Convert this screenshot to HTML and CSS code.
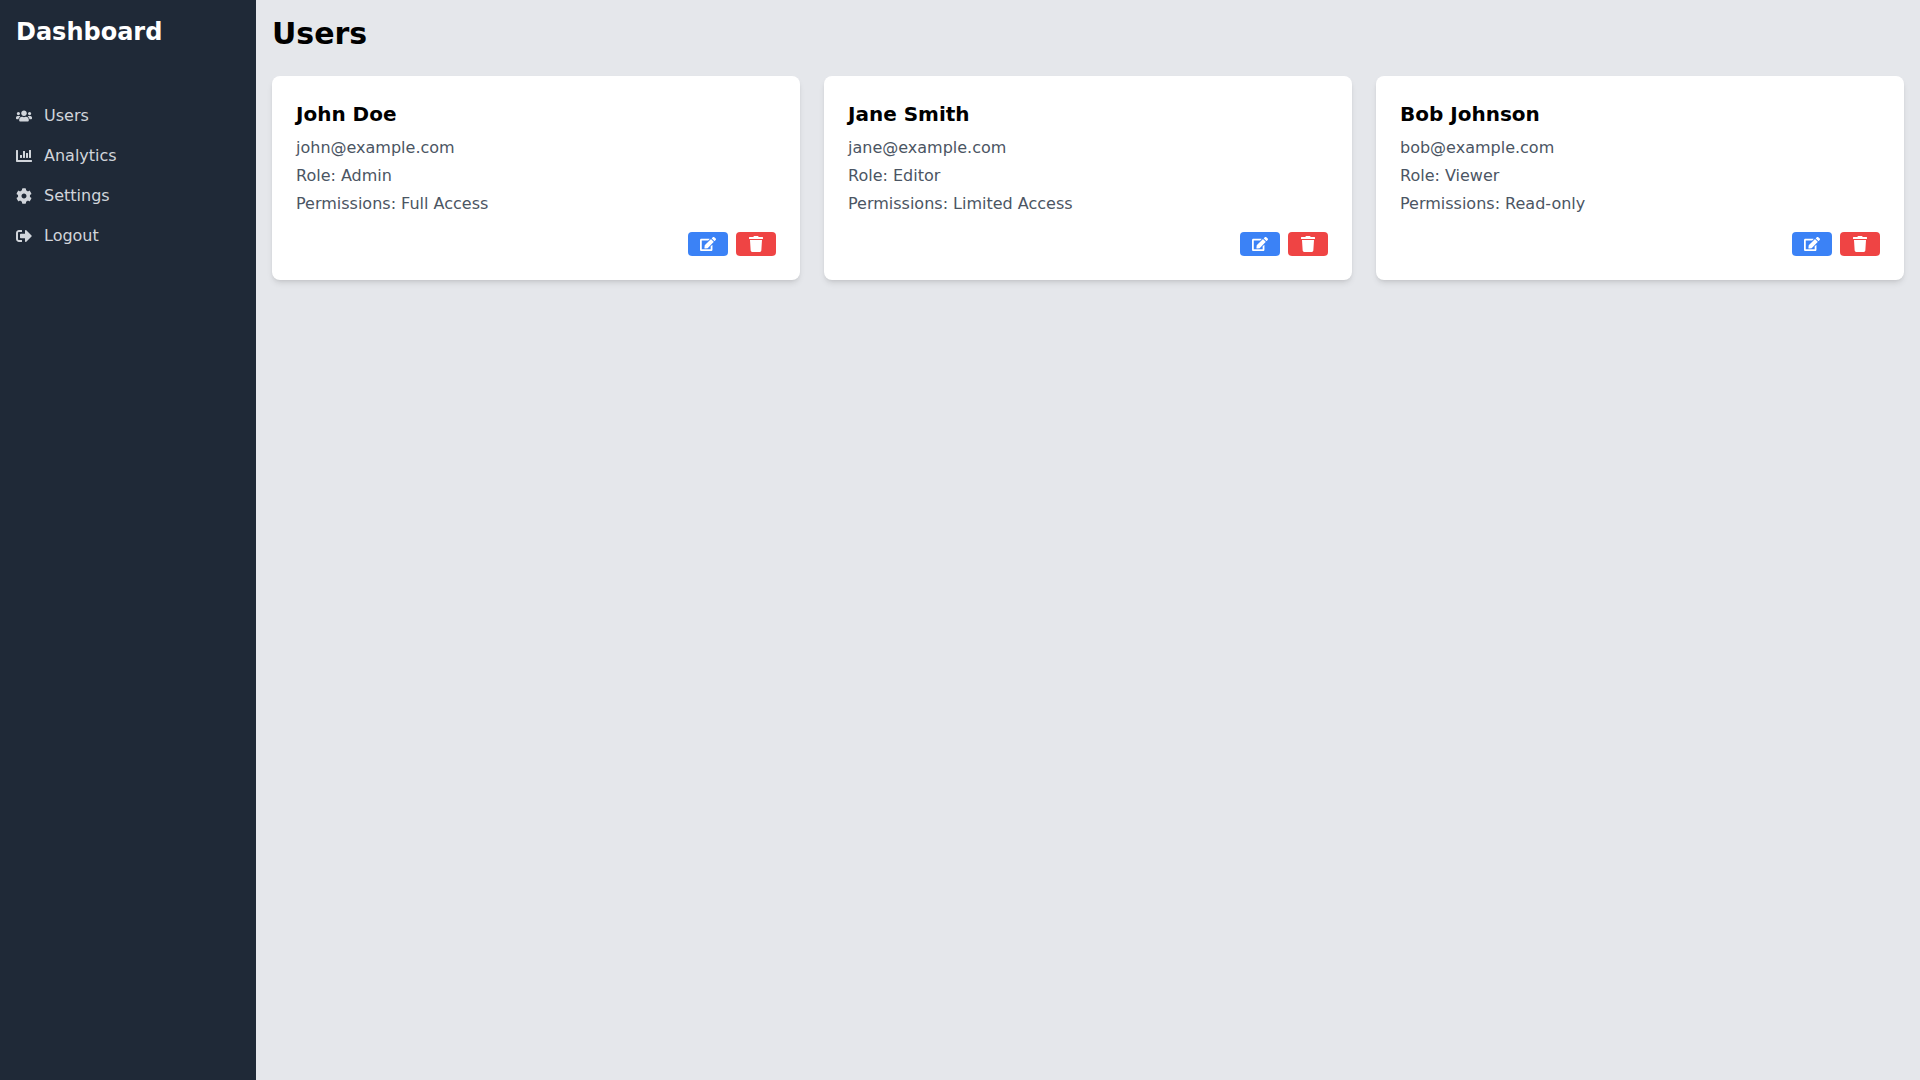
FILE: index.html
```html
<!DOCTYPE html>
<html lang="en">
<head>
    <meta charset="UTF-8">
    <meta name="viewport" content="width=device-width, initial-scale=1.0">
    <title>Dashboard</title>
    <link rel="stylesheet" href="styles.css">
</head>
<body>
    <div class="sidebar">
        <h1>Dashboard</h1>
        <nav class="nav">
            <a href="#" class="nav-link">
                <svg class="icon" viewBox="0 0 640 512"><path d="M96 224c35.3 0 64-28.7 64-64s-28.7-64-64-64-64 28.7-64 64 28.7 64 64 64zm448 0c35.3 0 64-28.7 64-64s-28.7-64-64-64-64 28.7-64 64 28.7 64 64 64zm32 32h-64c-17.6 0-33.5 7.1-45.1 18.6 40.3 22.1 68.9 62 75.1 109.4h66c17.7 0 32-14.3 32-32v-32c0-35.3-28.7-64-64-64zm-256 0c61.9 0 112-50.1 112-112S381.9 32 320 32 208 82.1 208 144s50.1 112 112 112zm76.8 32h-8.3c-20.8 10-43.9 16-68.5 16s-47.6-6-68.5-16h-8.3C179.6 288 128 339.6 128 403.2V432c0 26.5 21.5 48 48 48h288c26.5 0 48-21.5 48-48v-28.8c0-63.6-51.6-115.2-115.2-115.2zm-223.7-13.4C161.5 263.1 145.6 256 128 256H64c-35.3 0-64 28.7-64 64v32c0 17.7 14.3 32 32 32h65.9c6.3-47.4 34.9-87.3 75.2-109.4z"/></svg>
                Users
            </a>
            <a href="#" class="nav-link">
                <svg class="icon" viewBox="0 0 512 512"><path d="M332.8 320h38.4c6.4 0 12.8-6.4 12.8-12.8V172.8c0-6.4-6.4-12.8-12.8-12.8h-38.4c-6.4 0-12.8 6.4-12.8 12.8v134.4c0 6.4 6.4 12.8 12.8 12.8zm96 0h38.4c6.4 0 12.8-6.4 12.8-12.8V76.8c0-6.4-6.4-12.8-12.8-12.8h-38.4c-6.4 0-12.8 6.4-12.8 12.8v230.4c0 6.4 6.4 12.8 12.8 12.8zm-288 0h38.4c6.4 0 12.8-6.4 12.8-12.8v-70.4c0-6.4-6.4-12.8-12.8-12.8h-38.4c-6.4 0-12.8 6.4-12.8 12.8v70.4c0 6.4 6.4 12.8 12.8 12.8zm96 0h38.4c6.4 0 12.8-6.4 12.8-12.8V108.8c0-6.4-6.4-12.8-12.8-12.8h-38.4c-6.4 0-12.8 6.4-12.8 12.8v198.4c0 6.4 6.4 12.8 12.8 12.8zM496 384H64V80c0-8.84-7.16-16-16-16H16C7.16 64 0 71.16 0 80v336c0 17.67 14.33 32 32 32h464c8.84 0 16-7.16 16-16v-32c0-8.84-7.16-16-16-16z"/></svg>
                Analytics
            </a>
            <a href="#" class="nav-link">
                <svg class="icon" viewBox="0 0 512 512"><path d="M487.4 315.7l-42.6-24.6c4.3-23.2 4.3-47 0-70.2l42.6-24.6c4.9-2.8 7.1-8.6 5.5-14-11.1-35.6-30-67.8-54.7-94.6-3.8-4.1-10-5.1-14.8-2.3L380.8 110c-17.9-15.4-38.5-27.3-60.8-35.1V25.8c0-5.6-3.9-10.5-9.4-11.7-36.7-8.2-74.3-7.8-109.2 0-5.5 1.2-9.4 6.1-9.4 11.7V75c-22.2 7.9-42.8 19.8-60.8 35.1L88.7 85.5c-4.9-2.8-11-1.9-14.8 2.3-24.7 26.7-43.6 58.9-54.7 94.6-1.7 5.4.6 11.2 5.5 14L67.3 221c-4.3 23.2-4.3 47 0 70.2l-42.6 24.6c-4.9 2.8-7.1 8.6-5.5 14 11.1 35.6 30 67.8 54.7 94.6 3.8 4.1 10 5.1 14.8 2.3l42.6-24.6c17.9 15.4 38.5 27.3 60.8 35.1v49.2c0 5.6 3.9 10.5 9.4 11.7 36.7 8.2 74.3 7.8 109.2 0 5.5-1.2 9.4-6.1 9.4-11.7v-49.2c22.2-7.9 42.8-19.8 60.8-35.1l42.6 24.6c4.9 2.8 11 1.9 14.8-2.3 24.7-26.7 43.6-58.9 54.7-94.6 1.5-5.5-.7-11.3-5.6-14.1zM256 336c-44.1 0-80-35.9-80-80s35.9-80 80-80 80 35.9 80 80-35.9 80-80 80z"/></svg>
                Settings
            </a>
            <a href="#" class="nav-link">
                <svg class="icon" viewBox="0 0 512 512"><path d="M497 273L329 441c-15 15-41 4.5-41-17v-96H152c-13.3 0-24-10.7-24-24v-96c0-13.3 10.7-24 24-24h136V88c0-21.4 25.9-32 41-17l168 168c9.3 9.4 9.3 24.6 0 34zM192 436v-40c0-6.6-5.4-12-12-12H96c-17.7 0-32-14.3-32-32V160c0-17.7 14.3-32 32-32h84c6.6 0 12-5.4 12-12V76c0-6.6-5.4-12-12-12H96c-53 0-96 43-96 96v192c0 53 43 96 96 96h84c6.6 0 12-5.4 12-12z"/></svg>
                Logout
            </a>
        </nav>
    </div>

    <div class="main">
        <h2>Users</h2>
        <div class="card-grid">
            <div class="card">
                <h3>John Doe</h3>
                <p>john@example.com</p>
                <p>Role: Admin</p>
                <p>Permissions: Full Access</p>
                <div class="card-actions">
                    <button class="btn btn-edit"><svg class="icon" viewBox="0 0 576 512"><path d="M402.6 83.2l90.2 90.2c3.8 3.8 3.8 10 0 13.8L274.4 405.6l-92.8 10.3c-12.4 1.4-22.9-9.1-21.5-21.5l10.3-92.8L388.8 83.2c3.8-3.8 10-3.8 13.8 0zm162-22.9l-48.8-48.8c-15.2-15.2-39.9-15.2-55.2 0l-35.4 35.4c-3.8 3.8-3.8 10 0 13.8l90.2 90.2c3.8 3.8 10 3.8 13.8 0l35.4-35.4c15.2-15.3 15.2-40 0-55.2zM384 346.2V448H64V128h229.8c3.2 0 6.2-1.3 8.5-3.5l40-40c7.6-7.6 2.2-20.5-8.5-20.5H48C21.5 64 0 85.5 0 112v352c0 26.5 21.5 48 48 48h352c26.5 0 48-21.5 48-48V306.2c0-10.7-12.9-16-20.5-8.5l-40 40c-2.2 2.3-3.5 5.3-3.5 8.5z"/></svg></button>
                    <button class="btn btn-delete"><svg class="icon" viewBox="0 0 448 512"><path d="M432 32H312l-9.4-18.7A24 24 0 0 0 281.1 0H166.8a23.72 23.72 0 0 0-21.4 13.3L136 32H16A16 16 0 0 0 0 48v32a16 16 0 0 0 16 16h416a16 16 0 0 0 16-16V48a16 16 0 0 0-16-16zM53.2 467a48 48 0 0 0 47.9 45h245.8a48 48 0 0 0 47.9-45L416 128H32z"/></svg></button>
                </div>
            </div>
            <div class="card">
                <h3>Jane Smith</h3>
                <p>jane@example.com</p>
                <p>Role: Editor</p>
                <p>Permissions: Limited Access</p>
                <div class="card-actions">
                    <button class="btn btn-edit"><svg class="icon" viewBox="0 0 576 512"><path d="M402.6 83.2l90.2 90.2c3.8 3.8 3.8 10 0 13.8L274.4 405.6l-92.8 10.3c-12.4 1.4-22.9-9.1-21.5-21.5l10.3-92.8L388.8 83.2c3.8-3.8 10-3.8 13.8 0zm162-22.9l-48.8-48.8c-15.2-15.2-39.9-15.2-55.2 0l-35.4 35.4c-3.8 3.8-3.8 10 0 13.8l90.2 90.2c3.8 3.8 10 3.8 13.8 0l35.4-35.4c15.2-15.3 15.2-40 0-55.2zM384 346.2V448H64V128h229.8c3.2 0 6.2-1.3 8.5-3.5l40-40c7.6-7.6 2.2-20.5-8.5-20.5H48C21.5 64 0 85.5 0 112v352c0 26.5 21.5 48 48 48h352c26.5 0 48-21.5 48-48V306.2c0-10.7-12.9-16-20.5-8.5l-40 40c-2.2 2.3-3.5 5.3-3.5 8.5z"/></svg></button>
                    <button class="btn btn-delete"><svg class="icon" viewBox="0 0 448 512"><path d="M432 32H312l-9.4-18.7A24 24 0 0 0 281.1 0H166.8a23.72 23.72 0 0 0-21.4 13.3L136 32H16A16 16 0 0 0 0 48v32a16 16 0 0 0 16 16h416a16 16 0 0 0 16-16V48a16 16 0 0 0-16-16zM53.2 467a48 48 0 0 0 47.9 45h245.8a48 48 0 0 0 47.9-45L416 128H32z"/></svg></button>
                </div>
            </div>
            <div class="card">
                <h3>Bob Johnson</h3>
                <p>bob@example.com</p>
                <p>Role: Viewer</p>
                <p>Permissions: Read-only</p>
                <div class="card-actions">
                    <button class="btn btn-edit"><svg class="icon" viewBox="0 0 576 512"><path d="M402.6 83.2l90.2 90.2c3.8 3.8 3.8 10 0 13.8L274.4 405.6l-92.8 10.3c-12.4 1.4-22.9-9.1-21.5-21.5l10.3-92.8L388.8 83.2c3.8-3.8 10-3.8 13.8 0zm162-22.9l-48.8-48.8c-15.2-15.2-39.9-15.2-55.2 0l-35.4 35.4c-3.8 3.8-3.8 10 0 13.8l90.2 90.2c3.8 3.8 10 3.8 13.8 0l35.4-35.4c15.2-15.3 15.2-40 0-55.2zM384 346.2V448H64V128h229.8c3.2 0 6.2-1.3 8.5-3.5l40-40c7.6-7.6 2.2-20.5-8.5-20.5H48C21.5 64 0 85.5 0 112v352c0 26.5 21.5 48 48 48h352c26.5 0 48-21.5 48-48V306.2c0-10.7-12.9-16-20.5-8.5l-40 40c-2.2 2.3-3.5 5.3-3.5 8.5z"/></svg></button>
                    <button class="btn btn-delete"><svg class="icon" viewBox="0 0 448 512"><path d="M432 32H312l-9.4-18.7A24 24 0 0 0 281.1 0H166.8a23.72 23.72 0 0 0-21.4 13.3L136 32H16A16 16 0 0 0 0 48v32a16 16 0 0 0 16 16h416a16 16 0 0 0 16-16V48a16 16 0 0 0-16-16zM53.2 467a48 48 0 0 0 47.9 45h245.8a48 48 0 0 0 47.9-45L416 128H32z"/></svg></button>
                </div>
            </div>
        </div>
    </div>
</body>
</html>
```

FILE: styles.css
```css
body {
    margin: 0;
    height: 1080px;
    display: flex;
    font-family: "DejaVu Sans", sans-serif;
    font-size: 16px;
    line-height: 24px;
    background: #e5e7eb;
    color: #000;
    overflow: hidden;
}

.icon {
    display: block;
    width: 16px;
    height: 16px;
    fill: currentColor;
}

.sidebar {
    width: 256px;
    padding: 16px;
    box-sizing: border-box;
    background: #1f2937;
    color: #fff;
    flex-shrink: 0;
}

.sidebar h1 {
    margin: 0 0 48px 0;
    font-size: 24px;
    line-height: 32px;
    font-weight: bold;
}

.nav {
    display: flex;
    flex-direction: column;
}

.nav-link {
    display: flex;
    align-items: center;
    gap: 12px;
    padding: 8px 0;
    color: #d1d5db;
    text-decoration: none;
}

.main {
    flex: 1;
    padding: 16px;
}

.main h2 {
    margin: 0 0 24px 0;
    font-size: 30px;
    line-height: 36px;
    font-weight: bold;
}

.card-grid {
    display: grid;
    grid-template-columns: repeat(3, 1fr);
    gap: 24px;
}

.card {
    padding: 24px;
    background: #fff;
    border-radius: 8px;
    box-shadow: 0 4px 6px -1px rgba(0, 0, 0, 0.1), 0 2px 4px -2px rgba(0, 0, 0, 0.1);
}

.card h3 {
    margin: 0 0 8px 0;
    font-size: 20px;
    line-height: 28px;
    font-weight: bold;
}

.card p {
    margin: 0 0 4px 0;
    color: #4b5563;
}

.card-actions {
    display: flex;
    justify-content: flex-end;
    gap: 8px;
    margin-top: 16px;
}

.btn {
    display: flex;
    justify-content: center;
    padding: 4px 12px;
    border: none;
    border-radius: 4px;
    color: #fff;
    cursor: pointer;
}

.btn-edit {
    background: #3b82f6;
}

.btn-delete {
    background: #ef4444;
}
```
